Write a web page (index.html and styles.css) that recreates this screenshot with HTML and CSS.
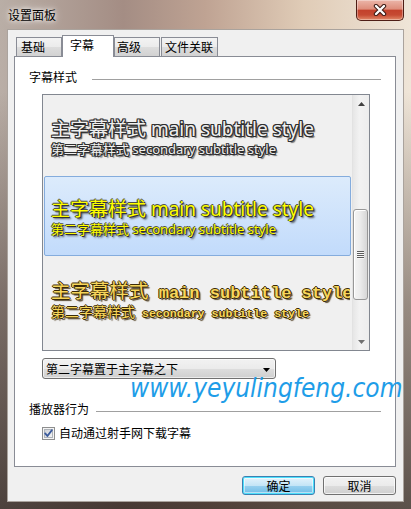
FILE: index.html
```html
<!DOCTYPE html>
<html lang="zh">
<head>
<meta charset="utf-8">
<title>设置面板</title>
<link rel="stylesheet" href="styles.css">
</head>
<body>
<div class="window">
  <div class="titlebar">
    <span class="title">设置面板</span>
    <div class="close">
      <svg width="14" height="12" viewBox="0 0 14 12">
        <path d="M3 2 L11 10 M11 2 L3 10" stroke="#3b1a14" stroke-width="4.4" stroke-linecap="round"/>
        <path d="M3 2 L11 10 M11 2 L3 10" stroke="#ffffff" stroke-width="2.4" stroke-linecap="round"/>
      </svg>
    </div>
  </div>
  <div class="client">
    <div class="tabs">
      <div class="tab t1">基础</div>
      <div class="tab active">字幕</div>
      <div class="tab t3">高级</div>
      <div class="tab t4">文件关联</div>
    </div>
    <div class="panel">
      <div class="group g1"><span>字幕样式</span><i class="rule"></i></div>
      <div class="listbox">
        <div class="items">
          <div class="item s1">
            <div class="main">主字幕样式 main subtitle style</div>
            <div class="sec">第二字幕样式 secondary subtitle style</div>
          </div>
          <div class="item s2 sel">
            <div class="main">主字幕样式 main subtitle style</div>
            <div class="sec">第二字幕样式 secondary subtitle style</div>
          </div>
          <div class="item s3">
            <div class="main"><span class="cjk">主字幕样式</span> main subtitle style</div>
            <div class="sec"><span class="cjk">第二字幕样式</span> secondary subtitle style</div>
          </div>
        </div>
        <div class="scrollbar">
          <div class="sbtn"><svg width="7" height="4" viewBox="0 0 7 4"><path d="M0 4 L3.5 0 L7 4 Z" fill="#404040"/></svg></div>
          <div class="track">
            <div class="thumb">
              <svg width="7" height="8" viewBox="0 0 7 8">
                <path d="M0 0.5H7M0 2.5H7M0 4.5H7M0 6.5H7" stroke="#5c5c5c" stroke-width="1"/>
                <path d="M0 1.5H7M0 3.5H7M0 5.5H7M0 7.5H7" stroke="#f8f8f8" stroke-width="1"/>
              </svg>
            </div>
          </div>
          <div class="sbtn down"><svg width="7" height="4" viewBox="0 0 7 4"><path d="M0 0 L7 0 L3.5 4 Z" fill="#707070"/></svg></div>
        </div>
      </div>
      <div class="combo">
        <span>第二字幕置于主字幕之下</span>
        <svg class="arrow" width="7" height="4" viewBox="0 0 7 4"><path d="M0 0 L7 0 L3.5 4 Z" fill="#000"/></svg>
      </div>
      <div class="group g2"><span>播放器行为</span><i class="rule"></i></div>
      <div class="check">
        <svg width="13" height="13" viewBox="0 0 13 13">
          <defs>
            <linearGradient id="cb" x1="0" y1="0" x2="1" y2="1">
              <stop offset="0" stop-color="#cbcfd5"/>
              <stop offset="1" stop-color="#f6f6f6"/>
            </linearGradient>
          </defs>
          <rect x="0.5" y="0.5" width="12" height="12" fill="#f4f4f4" stroke="#8e8f8f"/>
          <rect x="2.5" y="2.5" width="8" height="8" fill="url(#cb)" stroke="#aeb3b9"/>
          <path d="M3.2 6.4 L5.4 9 L9.8 3.2" fill="none" stroke="#3a5a9c" stroke-width="1.9" stroke-linecap="round" stroke-linejoin="round"/>
        </svg>
        <span>自动通过射手网下载字幕</span>
      </div>
    </div>
    <div class="buttons">
      <div class="btn default">确定</div>
      <div class="btn">取消</div>
    </div>
  </div>
  <div class="watermark">www.yeyulingfeng.com</div>
</div>
</body>
</html>
```
FILE: styles.css
```css
* { box-sizing: border-box; }
html, body { margin: 0; padding: 0; }
body {
  width: 411px;
  height: 509px;
  overflow: hidden;
  font-family: "Noto Sans CJK SC", "Noto Sans", sans-serif;
  font-size: 12px;
  color: #000;
}

.window {
  position: relative;
  width: 411px;
  height: 509px;
  padding: 0 7px 7px;
  display: flex;
  flex-direction: column;
  background:
    linear-gradient(180deg, rgba(50,32,26,0) 0%, rgba(50,32,26,0) 18%, rgba(45,30,25,.45) 60%, rgba(35,24,20,.72) 100%),
    linear-gradient(90deg, #b9aea6 0%, #a48d84 30%, #bfa393 50%, #e0ccb7 74%, #efe5d8 100%);
}

.titlebar {
  height: 29px;
  flex: none;
  display: flex;
  justify-content: space-between;
  align-items: flex-start;
  padding-left: 1px;
}
.title {
  margin-top: 7px;
  line-height: 16px;
  font-size: 12px;
  text-shadow: 0 0 4px #fff, 0 0 8px rgba(255,255,255,.85);
}
.close {
  width: 48px;
  height: 21px;
  border: 1px solid #4e1d15;
  border-top: none;
  border-radius: 0 0 5px 5px;
  background: linear-gradient(180deg, #ebb6a9 0%, #de8d7b 45%, #c3412b 52%, #c64a32 75%, #e28a69 100%);
  box-shadow: inset 0 0 0 1px rgba(255,255,255,.35);
  display: flex;
  align-items: center;
  justify-content: center;
}

.client {
  flex: 1;
  border: 1px solid #aaa39d;
  background: #f0f0f0;
  padding: 5px 7px 0 6px;
  display: flex;
  flex-direction: column;
}

.tabs {
  height: 21px;
  display: flex;
  align-items: flex-end;
  padding-left: 2px;
}
.tab {
  height: 19px;
  border: 1px solid #898c95;
  border-bottom: none;
  background: linear-gradient(#f3f3f3 0%, #ebebeb 50%, #dddddd 51%, #d2d2d2 100%);
  line-height: 17px;
  padding-left: 4px;
  white-space: nowrap;
}
.t1 { width: 46px; }
.tab.active {
  position: relative;
  z-index: 1;
  width: 52px;
  height: 22px;
  margin-bottom: -1px;
  background: #fff;
  padding-left: 7px;
  line-height: 17px;
}
.t3 { width: 46px; padding-left: 2px; }
.t4 { width: 57px; margin-left: 1px; padding-left: 3px; }

.panel {
  height: 411px;
  flex: none;
  border: 1px solid #898c95;
  background: #fff;
  padding: 0 14px;
}

.group {
  display: flex;
  height: 14px;
  line-height: 14px;
  white-space: nowrap;
}
.g1 { margin-top: 13px; }
.g2 { margin-top: 23px; }
.rule {
  flex: 1;
  height: 1px;
  margin-top: 9px;
  background: #a0a0a0;
}
.g1 .rule { margin-left: 15px; }
.g2 .rule { margin-left: 7px; }

.listbox {
  margin: 10px 0 0 13px;
  width: 328px;
  height: 257px;
  border: 1px solid #828790;
  background: #f0f0f0;
  display: flex;
}
.items {
  flex: 1;
  padding-top: 1px;
  overflow: hidden;
}
.item {
  height: 80px;
  margin: 0 1px;
  border: 1px solid transparent;
  padding: 21px 0 0 6px;
  white-space: nowrap;
  overflow: hidden;
}
.item.sel {
  border-color: #84acdd;
  border-radius: 2px;
  background: linear-gradient(#dcebfc, #c2dbfb);
}
.s1, .s2 { font-family: "Noto Sans", "Noto Sans CJK SC", sans-serif; }
.main { font-size: 19px; line-height: 23px; }
.sec { font-size: 13px; line-height: 16px; }

.s1 {
  color: #efefef;
  text-shadow: 1px 0 0 #2e2e2e, -1px 0 0 #2e2e2e, 0 1px 0 #2e2e2e, 0 -1px 0 #2e2e2e,
    1px 1px 0 #2e2e2e, -1px -1px 0 #2e2e2e, 1px -1px 0 #2e2e2e, -1px 1px 0 #2e2e2e, 2px 2px 1px #6a6a6a;
}
.s2 {
  color: #ffff00;
  text-shadow: 0 0 1px #2a2a2a, 1px 1px 0 #333, -1px 0 0 #555, 0 -1px 0 #555, 2px 2px 2px #444;
}
.s3 {
  color: #f7d65c;
  font-family: "Liberation Mono", "Noto Sans CJK SC", monospace;
  font-weight: bold;
  text-shadow: 1px 0 0 #3b2b08, -1px 0 0 #3b2b08, 0 1px 0 #3b2b08, 0 -1px 0 #3b2b08, 2px 2px 1px #5a4a30;
}
.s3 .main { font-size: 17px; line-height: 23px; }
.s3 .main .cjk { font-family: "Noto Sans CJK SC", sans-serif; font-size: 19.5px; font-weight: normal; }
.s3 .sec { font-size: 11.6px; line-height: 12px; }
.s3 .sec .cjk { font-family: "Noto Sans CJK SC", sans-serif; font-size: 14px; font-weight: normal; }

.scrollbar {
  width: 17px;
  flex: none;
  display: flex;
  flex-direction: column;
  background: linear-gradient(90deg, #e6e6e6, #f2f2f2 40%, #ededed);
  border-left: 1px solid #e2e2e2;
}
.sbtn {
  height: 17px;
  flex: none;
  display: flex;
  align-items: center;
  justify-content: center;
  padding-top: 1px;
}
.track { flex: 1; }
.thumb {
  margin-top: 97px;
  width: 15px;
  height: 91px;
  border: 1px solid #979797;
  border-radius: 3px;
  background: linear-gradient(90deg, #f4f4f4 0%, #ececec 45%, #d6d6d6 100%);
  box-shadow: inset 1px 1px 0 #fff;
  display: flex;
  align-items: center;
  justify-content: center;
}

.combo {
  margin: 7px 0 0 13px;
  width: 234px;
  height: 21px;
  border: 1px solid #707070;
  border-radius: 3px;
  background: linear-gradient(#f2f2f2 0%, #ebebeb 50%, #dddddd 51%, #cfcfcf 100%);
  box-shadow: inset 0 0 0 1px rgba(255,255,255,.6);
  display: flex;
  align-items: center;
  justify-content: space-between;
  padding: 0 5px 0 3px;
  line-height: 16px;
}
.combo .arrow { margin-top: 3px; }

.check {
  margin: 10px 0 0 13px;
  height: 14px;
  display: flex;
  align-items: center;
  gap: 4px;
  line-height: 14px;
}
.check svg { flex: none; }

.buttons {
  margin-top: 9px;
  display: flex;
  justify-content: flex-end;
  gap: 8px;
}
.btn {
  width: 73px;
  height: 19px;
  border: 1px solid #707070;
  border-radius: 3px;
  background: linear-gradient(#f2f2f2 0%, #ebebeb 50%, #dddddd 51%, #cfcfcf 100%);
  box-shadow: inset 0 0 0 1px rgba(255,255,255,.7);
  text-align: center;
  line-height: 17px;
}
.btn.default {
  border-color: #3c7fb1;
  background: linear-gradient(#e5f4fc 0%, #c4e5f6 50%, #98d1ef 51%, #6dbbe6 100%);
  box-shadow: inset 0 0 0 1px #4de0fc, inset 0 0 0 2px rgba(255,255,255,.5);
}

.watermark {
  position: absolute;
  left: 130px;
  top: 373px;
  font-family: "DejaVu Sans Condensed", "DejaVu Sans", sans-serif;
  font-stretch: condensed;
  font-style: italic;
  font-size: 26px;
  line-height: 30px;
  color: #1e9de8;
  white-space: nowrap;
}
```
